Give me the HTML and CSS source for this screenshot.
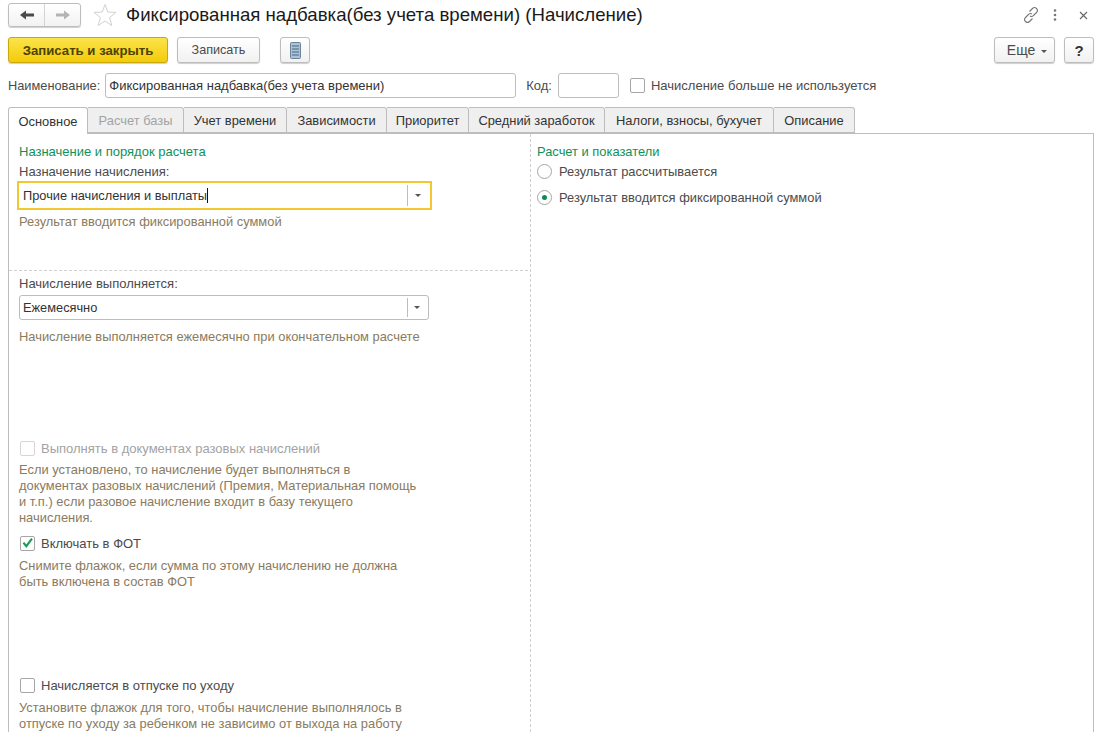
FILE: index.html
```html
<!DOCTYPE html>
<html lang="ru">
<head>
<meta charset="utf-8">
<title>Фиксированная надбавка</title>
<link rel="stylesheet" href="styles.css">
</head>
<body>
<div class="page">
  <header class="titlebar">
    <div class="nav">
      <button class="nav-btn"><svg width="16" height="12" viewBox="0 0 16 12"><path d="M1 6 7 1.500V4.500H15V7.500H7V10.500Z" fill="#4a4a4a"/></svg></button>
      <button class="nav-btn"><svg width="16" height="12" viewBox="0 0 16 12"><path d="M15 6 9 1.500V4.500H1V7.500H9V10.500Z" fill="#b4b4b4"/></svg></button>
    </div>
    <svg class="star" width="24" height="24" viewBox="0 0 24 24"><path d="M12 1.500 14.800 9 23 9.400 16.600 14.500 18.800 22.500 12 18 5.200 22.500 7.400 14.500 1 9.400 9.200 9Z" fill="none" stroke="#d2d2d2"/></svg>
    <h1 class="title">Фиксированная надбавка(без учета времени) (Начисление)</h1>
    <div class="win-icons">
      <svg width="18" height="18" viewBox="0 0 18 18"><g fill="none" stroke="#777" stroke-width="1.100"><path d="M7.500 5.500 10.500 2.500a2.800 2.800 0 0 1 4 4L11.500 9.500a2.800 2.800 0 0 1-3.500.5"/><path d="M10.500 12.500 7.500 15.500a2.800 2.800 0 0 1-4-4L6.500 8.500a2.800 2.800 0 0 1 3.500-.5"/></g></svg>
      <svg class="dots" width="4" height="12" viewBox="0 0 4 12"><g fill="#777"><circle cx="2" cy="1.500" r="1.300"/><circle cx="2" cy="6" r="1.300"/><circle cx="2" cy="10.500" r="1.300"/></g></svg>
      <svg class="close" width="9" height="9" viewBox="0 0 9 9"><path d="M1 1 8 8M8 1 1 8" stroke="#666" stroke-width="1.100"/></svg>
    </div>
  </header>

  <div class="toolbar">
    <button class="btn btn-primary">Записать и закрыть</button>
    <button class="btn btn-save">Записать</button>
    <button class="btn btn-icon"><svg width="11" height="17" viewBox="0 0 11 17"><rect x=".5" y=".5" width="10" height="16" rx="1" fill="#a9c3dc" stroke="#6d8297"/><path d="M2 4H9M2 7H9M2 10H9M2 13H9" stroke="#4f6578"/></svg></button>
    <div class="toolbar-right">
      <button class="btn btn-more">Еще <span class="caret"></span></button>
      <button class="btn btn-help">?</button>
    </div>
  </div>

  <div class="fields">
    <label class="field-label name-label">Наименование:</label>
    <div class="input input-name">Фиксированная надбавка(без учета времени)</div>
    <label class="field-label code-label">Код:</label>
    <div class="input input-code"></div>
    <span class="check check-unused"></span>
    <span class="field-label">Начисление больше не используется</span>
  </div>

  <nav class="tabs">
    <div class="tab tab-active t1">Основное</div>
    <div class="tab tab-disabled t2">Расчет базы</div>
    <div class="tab t3">Учет времени</div>
    <div class="tab t4">Зависимости</div>
    <div class="tab t5">Приоритет</div>
    <div class="tab t6">Средний заработок</div>
    <div class="tab t7">Налоги, взносы, бухучет</div>
    <div class="tab t8">Описание</div>
  </nav>

  <main class="panel">
    <section class="col-left">
      <div class="group group-purpose">
        <div class="heading">Назначение и порядок расчета</div>
        <div class="label">Назначение начисления:</div>
        <div class="combo combo-focus">
          <span class="combo-text">Прочие начисления и выплаты<i class="cursor"></i></span>
          <span class="combo-arrow"><span class="caret"></span></span>
        </div>
        <p class="hint">Результат вводится фиксированной суммой</p>
      </div>
      <div class="group group-period">
        <div class="label">Начисление выполняется:</div>
        <div class="combo">
          <span class="combo-text">Ежемесячно</span>
          <span class="combo-arrow"><span class="caret"></span></span>
        </div>
        <p class="hint hint-period">Начисление выполняется ежемесячно при окончательном расчете</p>
      </div>
      <div class="group group-oneoff">
        <div class="check-row disabled"><span class="check check-disabled"></span>Выполнять в документах разовых начислений</div>
        <p class="hint">Если установлено, то начисление будет выполняться в<br>документах разовых начислений (Премия, Материальная помощь<br>и т.п.) если разовое начисление входит в базу текущего<br>начисления.</p>
      </div>
      <div class="group group-fot">
        <div class="check-row"><span class="check"><svg width="16" height="14" viewBox="0 0 16 14"><path d="M3 6.500 6.500 11 13.500 1.500" fill="none" stroke="#1c9a5a" stroke-width="2.600"/></svg></span>Включать в ФОТ</div>
        <p class="hint">Снимите флажок, если сумма по этому начислению не должна<br>быть включена в состав ФОТ</p>
      </div>
      <div class="group group-leave">
        <div class="check-row"><span class="check"></span>Начисляется в отпуске по уходу</div>
        <p class="hint">Установите флажок для того, чтобы начисление выполнялось в<br>отпуске по уходу за ребенком не зависимо от выхода на работу</p>
      </div>
    </section>
    <section class="col-right">
      <div class="heading">Расчет и показатели</div>
      <div class="radio-row"><span class="radio"></span>Результат рассчитывается</div>
      <div class="radio-row"><span class="radio radio-on"></span>Результат вводится фиксированной суммой</div>
    </section>
  </main>
</div>
</body>
</html>
```
FILE: styles.css
```css
* { box-sizing: border-box; }
html, body { margin: 0; padding: 0; height: 100%; overflow: hidden; background: #fff; }
body { font-family: "Liberation Sans", Arial, sans-serif; font-size: 13px; color: #4b4b4b; }
.page { height: 732px; padding: 3px 5px 0 8px; display: flex; flex-direction: column; overflow: hidden; }
button { font-family: inherit; }

.titlebar { display: flex; align-items: center; height: 24px; }
.nav { display: flex; width: 73px; height: 24px; border: 1px solid #bdbdbd; border-radius: 3px; background: linear-gradient(#fff, #f2f2f2); box-shadow: 0 1px 1px #d0d0d0; }
.nav-btn { flex: 1; padding: 0; border: 0; background: none; display: flex; align-items: center; justify-content: center; }
.nav-btn + .nav-btn { border-left: 1px solid #d4d4d4; }
.star { margin-left: 12px; }
.title { margin: 0 0 0 9px; font-size: 18.640px; font-weight: 400; color: #1a1a1a; white-space: nowrap; }
.win-icons { margin-left: auto; display: flex; align-items: center; padding-right: 6px; }
.dots { margin-left: 13px; }
.close { margin-left: 22px; }

.toolbar { display: flex; align-items: center; margin-top: 10px; height: 26px; }
.btn { height: 26px; padding: 0; border: 1px solid #bdbdbd; border-radius: 3px; background: linear-gradient(#fff, #f1f1f1); box-shadow: 0 1px 1px #cfcfcf; color: #4b4b4b; font-size: 12.600px; }
.btn-primary { width: 160px; background: linear-gradient(#fbe44a, #f4cb0a); border-color: #c9a80c; color: #4c4300; font-weight: 700; font-size: 13.200px; }
.btn-save { width: 83px; margin-left: 9px; }
.btn-icon { width: 30px; margin-left: 20px; display: flex; align-items: center; justify-content: center; }
.toolbar-right { margin-left: auto; display: flex; gap: 9px; }
.btn-more { width: 61px; font-size: 14px; padding-left: 5px; }
.btn-help { width: 30px; font-size: 15px; font-weight: 700; color: #333; }
.caret { display: inline-block; width: 0; height: 0; border: 3px solid transparent; border-top: 3px solid #555; border-bottom: 0; vertical-align: middle; }
.btn-more .caret { margin-left: 2px; }

.fields { display: flex; align-items: center; height: 25px; margin-top: 10px; }
.field-label { white-space: nowrap; }
.name-label { font-size: 12.800px; }
.input { height: 25px; border: 1px solid #bdbdbd; border-radius: 3px; background: #fff; line-height: 23px; padding-left: 3px; color: #333; }
.input-name { width: 411px; margin-left: 5px; }
.code-label { margin-left: 10px; }
.input-code { width: 61px; margin-left: 6px; }
.check { flex: none; display: inline-flex; align-items: center; justify-content: center; width: 15px; height: 15px; border: 1px solid #a6a6a6; border-radius: 2px; background: #fff; }
.check-unused { margin: 0 6px 0 11px; }
.check-disabled { border-color: #d6d6d6; }

.tabs { display: flex; height: 26px; margin-top: 9px; position: relative; z-index: 1; }
.tab { height: 26px; border: 1px solid #bdbdbd; border-left: 0; border-radius: 0 3px 0 0; background: #efefef; display: flex; align-items: center; justify-content: center; color: #333; white-space: nowrap; font-size: 12.900px; }
.tab-active { border-left: 1px solid #bdbdbd; border-bottom: 0; border-radius: 3px 3px 0 0; background: #fff; height: 27px; }
.tab-disabled { color: #a3a3a3; }
.t1 { width: 80px; } .t2 { width: 96px; } .t3 { width: 103px; } .t4 { width: 100px; }
.t5 { width: 82px; } .t6 { width: 136px; } .t7 { width: 169px; } .t8 { width: 81px; }

.panel { flex: 1; display: flex; width: 1086px; border: 1px solid #bdbdbd; border-bottom: 0; min-height: 0; overflow: hidden; }
.col-left { width: 522px; flex: none; border-right: 1px dashed #d0d0d0; }
.col-right { flex: 1; padding: 10px 0 0 6px; font-size: 12.900px; }
.heading { color: #0f9158; line-height: 16px; }
.label { line-height: 16px; margin-top: 4px; color: #4b4b4b; }
.group { padding-left: 10px; }
.group-purpose { height: 137px; padding-top: 10px; border-bottom: 1px dashed #d0d0d0; margin-right: 2px; }
.group-period { height: 169px; padding-top: 5px; }
.group-period .label { margin-top: 0; }
.group-oneoff { height: 95px; }
.group-fot { height: 142px; }
.combo { display: flex; align-items: center; width: 410px; height: 25px; margin-top: 3px; border: 1px solid #bdbdbd; border-radius: 3px; background: #fff; color: #333; }
.combo-focus { width: 415px; height: 29px; margin: 1px 0 0 -2px; border: 2px solid #f3c72e; border-radius: 0; padding-left: 1px; }
.combo-text { flex: 1; padding-left: 3px; white-space: nowrap; font-size: 12.800px; }
.combo-arrow { flex: none; width: 21px; height: 19px; border-left: 1px solid #bdbdbd; padding-right: 2px; display: flex; align-items: center; justify-content: center; }
.combo-focus .combo-arrow { width: 22px; height: 21px; margin-right: 1px; }
.cursor { display: inline-block; width: 1px; height: 15px; background: #111; vertical-align: -3px; }
.hint { margin: 7px 0 0; line-height: 16px; color: #8a7b5e; font-size: 12.900px; }
.group-purpose .hint { margin-top: 4px; }
.group-oneoff .hint { margin-top: 6px; }
.group-period .hint-period { margin-top: 9px; }
.check-row { display: flex; align-items: center; gap: 6px; height: 16px; color: #4b4b4b; white-space: nowrap; padding-left: 1px; }
.check-row.disabled { color: #a3a3a3; }
.radio-row { display: flex; align-items: center; gap: 7px; height: 16px; color: #4b4b4b; margin-top: 3px; }
.radio-row + .radio-row { margin-top: 10px; }
.radio { flex: none; width: 15px; height: 15px; border: 1px solid #a6a6a6; border-radius: 50%; background: #fff; display: flex; align-items: center; justify-content: center; }
.radio-on::after { content: ""; width: 5px; height: 5px; border-radius: 50%; background: #0f8a50; }
```
